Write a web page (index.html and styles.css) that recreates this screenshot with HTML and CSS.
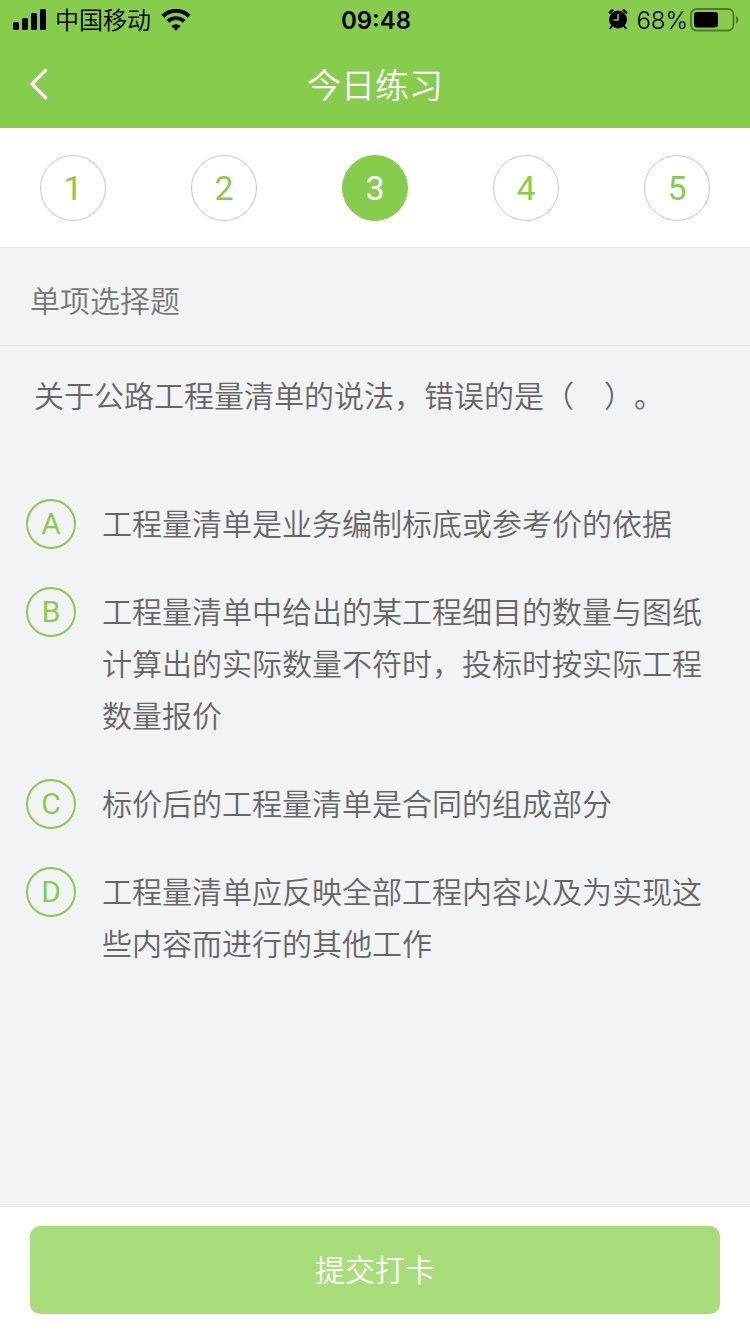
FILE: index.html
```html
<!DOCTYPE html>
<html lang="zh-CN">
<head>
  <meta charset="UTF-8">
  <title>今日练习</title>
  <meta name="viewport" content="width=device-width, initial-scale=1.0">
  <link rel="stylesheet" href="styles.css">
</head>
<body>
  <header class="top">
    <div class="status">
      <div class="status-left">
        <svg class="signal" width="34" height="24" viewBox="0 0 34 24">
          <rect x="0" y="13" width="6" height="8" rx="1.5"/>
          <rect x="9" y="9" width="6" height="12" rx="1.5"/>
          <rect x="18" y="4" width="6" height="17" rx="1.5"/>
          <rect x="27" y="0" width="6" height="21" rx="1.5"/>
        </svg>
        <span>中国移动</span>
        <svg class="wifi" width="30" height="24" viewBox="0 0 30 24">
          <path d="M1.8 7.2a19 19 0 0 1 26.4 0" fill="none" stroke="#000" stroke-width="4"/>
          <path d="M6.8 12.4a12 12 0 0 1 16.4 0" fill="none" stroke="#000" stroke-width="3.8"/>
          <path d="M10.2 17.1a7 7 0 0 1 9.6 0L15 21.8z"/>
        </svg>
      </div>
      <time class="clock">09:48</time>
      <div class="status-right">
        <svg class="alarm" width="20" height="24" viewBox="0 0 20 24">
          <circle cx="10" cy="10.5" r="9"/>
          <path d="M1.8 3.6 4.4 1.200M18.200 3.600 15.600 1.200" stroke="#000" stroke-width="2.400" stroke-linecap="round"/>
          <path d="M4 17 2.200 19.400M16 17l1.800 2.400" stroke="#000" stroke-width="1.800" stroke-linecap="round"/>
          <path d="M10 5v6H5.400" fill="none" stroke="#87cc4c" stroke-width="1.500"/>
        </svg>
        <span>68%</span>
        <svg class="battery" width="49" height="26" viewBox="0 0 49 26">
          <rect x="1" y="1" width="42.500" height="21.500" rx="5.500" fill="none" stroke="#517a2d" stroke-width="1.800"/>
          <rect x="4" y="4" width="24" height="15.500" rx="3"/>
          <path d="M46 8v8q2.500-1.500 2.500-4T46 8z" fill="#517a2d"/>
        </svg>
      </div>
    </div>
    <div class="navbar">
      <button class="back" type="button" aria-label="返回">
        <svg width="20" height="32" viewBox="0 0 20 32">
          <path d="M16.500 2.500 3 16l13.500 13.500" fill="none" stroke="#fff" stroke-width="3.400" stroke-linecap="round"/>
        </svg>
      </button>
      <h1>今日练习</h1>
    </div>
  </header>

  <nav class="steps">
    <button type="button">1</button>
    <button type="button">2</button>
    <button type="button" class="active" aria-current="step">3</button>
    <button type="button">4</button>
    <button type="button">5</button>
  </nav>

  <main>
    <h2 class="type">单项选择题</h2>
    <form id="quiz">
      <fieldset>
        <legend>关于公路工程量清单的说法，错误的是（　）。</legend>
        <label class="option">
          <span class="mark"><input type="radio" name="answer" value="A"><span>A</span></span>
          <span class="text">工程量清单是业务编制标底或参考价的依据</span>
        </label>
        <label class="option">
          <span class="mark"><input type="radio" name="answer" value="B"><span>B</span></span>
          <span class="text">工程量清单中给出的某工程细目的数量与图纸计算出的实际数量不符时，投标时按实际工程数量报价</span>
        </label>
        <label class="option">
          <span class="mark"><input type="radio" name="answer" value="C"><span>C</span></span>
          <span class="text">标价后的工程量清单是合同的组成部分</span>
        </label>
        <label class="option">
          <span class="mark"><input type="radio" name="answer" value="D"><span>D</span></span>
          <span class="text">工程量清单应反映全部工程内容以及为实现这些内容而进行的其他工作</span>
        </label>
      </fieldset>
    </form>
  </main>

  <footer class="bottom">
    <button class="submit" type="submit" form="quiz">提交打卡</button>
  </footer>
</body>
</html>
```
FILE: styles.css
```css
* {
  box-sizing: border-box;
}
body {
  margin: 0;
  min-height: 100vh;
  display: flex;
  flex-direction: column;
  font-family: Inter, "Noto Sans CJK SC", sans-serif;
  font-size: 30px;
  font-weight: 350;
  line-height: 52px;
  color: #666;
  background: #f2f3f5;
  text-spacing-trim: space-all;
}
button {
  font: inherit;
  padding: 0;
  border: none;
  cursor: pointer;
}
svg {
  display: block;
}
.top {
  background: #87cc4c;
}

/* status bar */
.status {
  display: grid;
  grid-template-columns: 1fr auto 1fr;
  align-items: center;
  height: 40px;
  padding: 2px 11px 0 13px;
  font-size: 24px;
  line-height: 38px;
  color: #000;
}
.status-left, .status-right {
  display: flex;
  align-items: center;
}
.status-left {
  gap: 8px;
}
.wifi {
  margin-left: 2px;
}
.status-right {
  justify-content: flex-end;
  gap: 2px;
}
.alarm {
  margin-right: 6px;
}
.clock {
  font-weight: 600;
}

/* title bar */
.navbar {
  display: grid;
  grid-template-columns: 60px 1fr 60px;
  align-items: center;
  height: 88px;
}
.back {
  height: 88px;
  padding-left: 29px;
  background: none;
}
.navbar h1 {
  margin: 0;
  padding-top: 4px;
  font-size: 34px;
  font-weight: 350;
  text-align: center;
  color: #fff;
}

.steps {
  display: flex;
  justify-content: space-between;
  padding: 27px 40px 26px;
  background: #fff;
  border-bottom: 1px solid #e8e8e8;
}
.steps button {
  width: 66px;
  height: 66px;
  border: 1px solid #c8c8c8;
  border-radius: 50%;
  background: #fff;
  color: #87cc4c;
  font-family: Roboto, sans-serif;
  font-size: 34px;
  font-weight: 400;
  line-height: 64px;
}
.steps .active {
  border-color: #87cc4c;
  background: #87cc4c;
  color: #fff;
}

main {
  flex: 1;
}
.type {
  margin: 0;
  padding: 27px 30px 18px;
  border-bottom: 1px solid #e9eaec;
  font-size: 30px;
  font-weight: 350;
  color: #777;
}
fieldset {
  margin: 0;
  padding: 24px 26px;
  border: none;
}
legend {
  float: left;
  width: 100%;
  padding: 0 8px;
  margin-bottom: 76px;
}
.option {
  clear: both;
  display: flex;
  gap: 26px;
  margin-bottom: 36px;
  cursor: pointer;
}
.mark {
  display: grid;
  flex: none;
  width: 50px;
  height: 52px;
  place-items: center;
  color: #87cc4c;
  font-family: Roboto, sans-serif;
  font-size: 30px;
  font-weight: 400;
}
.mark > * {
  grid-area: 1 / 1;
}
.mark input {
  appearance: none;
  width: 50px;
  height: 50px;
  margin: 0;
  border: 2px solid #87cc4c;
  border-radius: 50%;
}
.mark input:checked {
  background: #87cc4c;
}
.mark input:checked + span {
  color: #fff;
}
.text {
  flex: 1;
}

.bottom {
  padding: 19px 30px 20px;
  background: #fff;
  border-top: 1px solid #e5e6e8;
}
.submit {
  width: 100%;
  height: 88px;
  border-radius: 10px;
  background: #a9dc7b;
  color: #fff;
}
```
